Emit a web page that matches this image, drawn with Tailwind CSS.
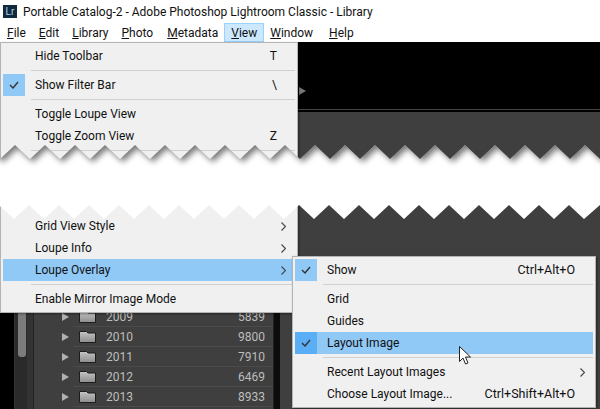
<!DOCTYPE html>
<html lang="en">

<head>
    <meta charset="UTF-8" />
    <title>Portable Catalog-2 - Adobe Photoshop Lightroom Classic - Library</title>
    <script src="https://cdn.jsdelivr.net/npm/@tailwindcss/browser@4"></script>
</head>

<body class="w-[600px] h-[409px] overflow-hidden bg-white font-['Roboto','Noto_Sans',sans-serif] text-[12px] text-[#111]">
    <div class="relative w-[600px] h-[409px] overflow-hidden flex flex-col">

        <!-- shared gradients -->
        <svg class="absolute w-0 h-0">
            <defs>
                <linearGradient id="folder" x1="0" y1="0" x2="0" y2="1">
                    <stop offset="0" stop-color="#c4c4c4" />
                    <stop offset="1" stop-color="#8c8c8c" />
                </linearGradient>
            </defs>
        </svg>

        <!-- Title bar -->
        <div class="h-[23px] flex items-center pl-[3px] gap-[6px] shrink-0">
            <div class="w-[14px] h-[13px] bg-[#10293c] text-[#a9cfe8] text-[10px] leading-[13px] text-center">Lr</div>
            <span>Portable Catalog-2 - Adobe Photoshop Lightroom Classic - Library</span>
        </div>

        <!-- Menu bar -->
        <nav class="h-[19px] flex items-center pl-[7px] gap-[13px] shrink-0">
            <span><u>F</u>ile</span>
            <span><u>E</u>dit</span>
            <span><u>L</u>ibrary</span>
            <span><u>P</u>hoto</span>
            <span class="ml-[1px]"><u>M</u>etadata</span>
            <span class="px-[6px] -mx-[7px] h-[19px] leading-[18px] bg-[#cce8ff] border border-[#99d1ff]"><u>V</u>iew</span>
            <span><u>W</u>indow</span>
            <span class="ml-[3px]"><u>H</u>elp</span>
        </nav>

        <!-- Lightroom window behind the menus -->
        <div class="flex-1 bg-black flex flex-col">
            <div class="h-[67px] shrink-0 relative">
                <div class="absolute left-[299px] top-[45px] w-0 h-0 border-y-[4px] border-y-transparent border-l-[7px] border-l-[#777]"></div>
            </div>
            <div class="h-px bg-[#444] shrink-0"></div>
            <div class="h-[2px] shrink-0"></div>
            <div class="flex-1 flex">
                <div class="w-[15px] bg-black border-r border-[#333] shrink-0"></div>
                <div class="w-[12px] bg-[#2a2a2a] shrink-0 relative">
                    <div class="absolute left-[3px] top-0 w-[8px] h-[245px] rounded-b-[3px] bg-[#7c7c7c]"></div>
                </div>
                <div class="w-[6px] bg-[#333] shrink-0"></div>
                <div class="w-[241px] bg-[#3f3f3f] border-x border-[#222] shrink-0 flex flex-col justify-end pb-[2px] text-[#bdbdbd]">
                    <div class="h-[20px] flex items-center pl-[28px]">
                        <i class="w-0 h-0 border-y-[4px] border-y-transparent border-l-[7px] border-l-[#b0b0b0]"></i>
                        <div class="flex-1 h-full ml-[4px] flex items-center pl-[6px] pr-[8px] border-b border-[#4b4b4b]">
                            <svg class="w-[17px] h-[13px]" viewBox="0 0 17 13"><path d="M.5 12.5V1.5h7l1.5 1.5h7.5v9.500z" fill="url(#folder)" stroke="#1c1c1c" /></svg>
                            <span class="ml-[10px] flex-1">2009</span><span>5839</span>
                        </div>
                    </div>
                    <div class="h-[20px] flex items-center pl-[28px]">
                        <i class="w-0 h-0 border-y-[4px] border-y-transparent border-l-[7px] border-l-[#b0b0b0]"></i>
                        <div class="flex-1 h-full ml-[4px] flex items-center pl-[6px] pr-[8px] border-b border-[#4b4b4b]">
                            <svg class="w-[17px] h-[13px]" viewBox="0 0 17 13"><path d="M.5 12.5V1.5h7l1.5 1.5h7.5v9.500z" fill="url(#folder)" stroke="#1c1c1c" /></svg>
                            <span class="ml-[10px] flex-1">2010</span><span>9800</span>
                        </div>
                    </div>
                    <div class="h-[20px] flex items-center pl-[28px]">
                        <i class="w-0 h-0 border-y-[4px] border-y-transparent border-l-[7px] border-l-[#b0b0b0]"></i>
                        <div class="flex-1 h-full ml-[4px] flex items-center pl-[6px] pr-[8px] border-b border-[#4b4b4b]">
                            <svg class="w-[17px] h-[13px]" viewBox="0 0 17 13"><path d="M.5 12.5V1.5h7l1.5 1.5h7.5v9.500z" fill="url(#folder)" stroke="#1c1c1c" /></svg>
                            <span class="ml-[10px] flex-1">2011</span><span>7910</span>
                        </div>
                    </div>
                    <div class="h-[20px] flex items-center pl-[28px]">
                        <i class="w-0 h-0 border-y-[4px] border-y-transparent border-l-[7px] border-l-[#b0b0b0]"></i>
                        <div class="flex-1 h-full ml-[4px] flex items-center pl-[6px] pr-[8px] border-b border-[#4b4b4b]">
                            <svg class="w-[17px] h-[13px]" viewBox="0 0 17 13"><path d="M.5 12.5V1.5h7l1.5 1.5h7.5v9.500z" fill="url(#folder)" stroke="#1c1c1c" /></svg>
                            <span class="ml-[10px] flex-1">2012</span><span>6469</span>
                        </div>
                    </div>
                    <div class="h-[20px] flex items-center pl-[28px]">
                        <i class="w-0 h-0 border-y-[4px] border-y-transparent border-l-[7px] border-l-[#b0b0b0]"></i>
                        <div class="flex-1 h-full ml-[4px] flex items-center pl-[6px] pr-[8px] border-b border-[#4b4b4b]">
                            <svg class="w-[17px] h-[13px]" viewBox="0 0 17 13"><path d="M.5 12.5V1.5h7l1.5 1.5h7.5v9.500z" fill="url(#folder)" stroke="#1c1c1c" /></svg>
                            <span class="ml-[10px] flex-1">2013</span><span>8933</span>
                        </div>
                    </div>
                </div>
                <div class="w-[6px] bg-[#0c0c0c] shrink-0"></div>
                <div class="flex-1 bg-[#3f3f3f]"></div>
            </div>
        </div>

        <!-- View menu -->
        <div class="absolute left-0 top-[42px] w-[298px] h-[271px] bg-[#f0f0f0] border border-[#b4b4b4] shadow-[1px_1px_2px_rgba(0,0,0,0.4)] overflow-hidden">
            <div class="h-[22px] mt-[2px] flex items-center pl-[34px] pr-[20px] justify-between"><span>Hide Toolbar</span><span>T</span></div>
            <div class="h-px bg-[#d0d0d0] ml-[30px] mr-[2px] my-[3px]"></div>
            <div class="h-[22px] flex items-center pr-[20px] justify-between relative">
                <div class="w-[22px] h-[22px] bg-[#90c8f6] ml-[2px] flex items-center justify-center">
                    <svg class="w-[10px] h-[8px]" viewBox="0 0 10 8"><path d="M1 4l3 3 5-6" fill="none" stroke="#333" stroke-width="1.4" /></svg>
                </div>
                <span class="absolute left-[34px]">Show Filter Bar</span><span>\</span>
            </div>
            <div class="h-px bg-[#d0d0d0] ml-[30px] mr-[2px] my-[3px]"></div>
            <div class="h-[22px] flex items-center pl-[34px]">Toggle Loupe View</div>
            <div class="h-[22px] flex items-center pl-[34px] pr-[20px] justify-between"><span>Toggle Zoom View</span><span>Z</span></div>
            <div class="h-px bg-[#d0d0d0] ml-[30px] mr-[2px] mt-[3px]"></div>

            <div class="absolute left-0 right-0 bottom-0">
                <div class="h-[22px] flex items-center pl-[34px] pr-[11px] justify-between">
                    <span>Grid View Style</span>
                    <svg class="w-[5px] h-[9px]" viewBox="0 0 5 9"><path d="M.5.5l4 4-4 4" fill="none" stroke="#444" stroke-width="1.1" /></svg>
                </div>
                <div class="h-[22px] flex items-center pl-[34px] pr-[11px] justify-between">
                    <span>Loupe Info</span>
                    <svg class="w-[5px] h-[9px]" viewBox="0 0 5 9"><path d="M.5.5l4 4-4 4" fill="none" stroke="#444" stroke-width="1.1" /></svg>
                </div>
                <div class="h-[22px] mx-[2px] flex items-center pl-[32px] pr-[9px] justify-between bg-[#90c8f6]">
                    <span>Loupe Overlay</span>
                    <svg class="w-[5px] h-[9px]" viewBox="0 0 5 9"><path d="M.5.5l4 4-4 4" fill="none" stroke="#444" stroke-width="1.1" /></svg>
                </div>
                <div class="h-px bg-[#d0d0d0] ml-[30px] mr-[2px] my-[3px]"></div>
                <div class="h-[22px] mb-[2px] flex items-center pl-[34px]">Enable Mirror Image Mode</div>
            </div>
        </div>

        <!-- Loupe Overlay submenu -->
        <div class="absolute left-[292px] top-[256px] w-[304px] h-[152px] bg-[#f0f0f0] border border-[#b4b4b4] shadow-[1px_1px_2px_rgba(0,0,0,0.4)] pt-[2px]">
            <div class="h-[22px] flex items-center pr-[20px] justify-between relative">
                <div class="w-[22px] h-[22px] bg-[#90c8f6] ml-[2px] flex items-center justify-center">
                    <svg class="w-[10px] h-[8px]" viewBox="0 0 10 8"><path d="M1 4l3 3 5-6" fill="none" stroke="#333" stroke-width="1.4" /></svg>
                </div>
                <span class="absolute left-[34px]">Show</span><span class="text-[12.5px]">Ctrl+Alt+O</span>
            </div>
            <div class="h-px bg-[#d0d0d0] ml-[30px] mr-[2px] my-[3px]"></div>
            <div class="h-[22px] flex items-center pl-[34px]">Grid</div>
            <div class="h-[22px] flex items-center pl-[34px]">Guides</div>
            <div class="h-[22px] mx-[2px] flex items-center relative bg-[#90c8f6]">
                <div class="w-[22px] h-[22px] bg-[#5aaef5] flex items-center justify-center">
                    <svg class="w-[10px] h-[8px]" viewBox="0 0 10 8"><path d="M1 4l3 3 5-6" fill="none" stroke="#333" stroke-width="1.4" /></svg>
                </div>
                <span class="absolute left-[32px]">Layout Image</span>
            </div>
            <div class="h-px bg-[#d0d0d0] ml-[30px] mr-[2px] my-[3px]"></div>
            <div class="h-[22px] flex items-center pl-[34px] pr-[10px] justify-between">
                <span>Recent Layout Images</span>
                <svg class="w-[5px] h-[9px]" viewBox="0 0 5 9"><path d="M.5.5l4 4-4 4" fill="none" stroke="#444" stroke-width="1.1" /></svg>
            </div>
            <div class="h-[22px] flex items-center pl-[34px] pr-[20px] justify-between"><span>Choose Layout Image...</span><span class="text-[12.5px]">Ctrl+Shift+Alt+O</span></div>
        </div>

        <!-- Mouse pointer -->
        <svg class="absolute left-[459px] top-[346px] w-[13px] h-[20px]" viewBox="0 0 13 20">
            <path d="M.5.500v15l3.500-3.500 2.500 6 2.500-1-2.500-6h5z" fill="#fff" stroke="#222" stroke-width="1" />
        </svg>

        <!-- Torn paper band -->
        <svg class="absolute left-0 top-[140px] w-[600px] h-[85px]" viewBox="0 0 600 85">
            <defs>
                <clipPath id="band">
                    <path d="M0 19L15 5 30 19 45 5 60 19 75 5 90 19 105 5 120 19 135 5 150 19 165 5 180 19 195 5 210 19 225 5 240 19 255 5 270 19 285 5 300 19 315 5 330 19 345 5 360 19 375 5 390 19 405 5 420 19 435 5 450 19 465 5 480 19 495 5 510 19 525 5 540 19 555 5 570 19 585 5 600 19V65L584 79 569 65 554 79 539 65 524 79 509 65 494 79 479 65 464 79 449 65 434 79 419 65 404 79 389 65 374 79 359 65 344 79 329 65 314 79 299 65 284 79 269 65 254 79 239 65 224 79 209 65 194 79 179 65 164 79 149 65 134 79 119 65 104 79 89 65 74 79 59 65 44 79 29 65 14 79 0 66z" />
                </clipPath>
                <filter id="soft" x="-5%" y="-50%" width="110%" height="200%">
                    <feGaussianBlur stdDeviation="3" />
                </filter>
            </defs>
            <g clip-path="url(#band)">
                <rect width="600" height="85" fill="#fff" />
                <path filter="url(#soft)" transform="translate(3 3)" d="M-30 19L-15 5 0 19 15 5 30 19 45 5 60 19 75 5 90 19 105 5 120 19 135 5 150 19 165 5 180 19 195 5 210 19 225 5 240 19 255 5 270 19 285 5 300 19 315 5 330 19 345 5 360 19 375 5 390 19 405 5 420 19 435 5 450 19 465 5 480 19 495 5 510 19 525 5 540 19 555 5 570 19 585 5 600 19 615 5 630 19V-30H-30z" fill="#000" opacity="0.55" />
            </g>
        </svg>
    </div>
</body>

</html>
